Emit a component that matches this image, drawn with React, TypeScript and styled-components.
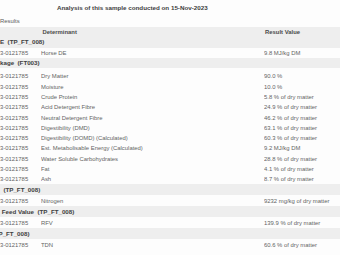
import React from "react";
import styled, { createGlobalStyle } from "styled-components";

const GlobalStyle = createGlobalStyle`
  html, body {
    margin: 0;
    padding: 0;
    background: #ffffff;
    overflow: hidden;
  }
  body {
    font-family: "Liberation Sans", Arial, sans-serif;
    color: #555;
  }
`;

const Page = styled.div`
  width: 340px;
  height: 255px;
  display: flex;
  flex-direction: column;
  background: #fdfdfd;
`;

const Title = styled.div`
  height: 16px;
  line-height: 16px;
  padding-left: 57px;
  font-size: 6.25px;
  font-weight: bold;
  color: #3e3e3e;
  white-space: nowrap;
`;

const Caption = styled.div`
  height: 11px;
  line-height: 11px;
  font-size: 5.9px;
  color: #5c5c5c;
`;

const Row = styled.div<{ $h: number; $band?: boolean; $top?: number }>`
  display: grid;
  grid-template-columns: 41px 223px 1fr;
  align-items: center;
  height: ${(p) => p.$h}px;
  margin-top: ${(p) => p.$top || 0}px;
  background: ${(p) => (p.$band ? "#eeeeee" : "transparent")};
  font-size: 5.9px;
  white-space: nowrap;
  color: #646464;
`;

const HeadCell = styled.span<{ $col: number }>`
  grid-column: ${(p) => p.$col};
  font-weight: bold;
  color: #4a4a4a;
  padding-left: ${(p) => (p.$col === 2 ? 1.5 : 1)}px;
`;

const Group = styled.div<{ $h: number; $shift?: number }>`
  height: ${(p) => p.$h}px;
  line-height: ${(p) => p.$h}px;
  background: #eeeeee;
  font-size: 6.2px;
  font-weight: bold;
  color: #404040;
  white-space: pre;
  margin-left: ${(p) => p.$shift || 0}px;
`;

const Cell = styled.span`
  overflow: hidden;
`;

type Item =
  | { kind: "group"; text: string; h: number; shift?: number }
  | { kind: "data"; name: string; value: string; h: number; top?: number };

const sample = "3-0121785";

const items: Item[] = [
  { kind: "group", text: "E  (TP_FT_008)", h: 10.5 },
  { kind: "data", name: "Horse DE", value: "9.8 MJ/kg DM", h: 10 },
  { kind: "group", text: "kage  (FT003)", h: 10 },
  { kind: "data", name: "Dry Matter", value: "90.0 %", h: 11, top: 3 },
  { kind: "data", name: "Moisture", value: "10.0 %", h: 10.3 },
  { kind: "data", name: "Crude Protein", value: "5.8 % of dry matter", h: 10.3 },
  { kind: "data", name: "Acid Detergent Fibre", value: "24.9 % of dry matter", h: 10.3 },
  { kind: "data", name: "Neutral Detergent Fibre", value: "46.2 % of dry matter", h: 10.3 },
  { kind: "data", name: "Digestibility (DMD)", value: "63.1 % of dry matter", h: 10.3 },
  { kind: "data", name: "Digestibility (DOMD) (Calculated)", value: "60.3 % of dry matter", h: 10.3 },
  { kind: "data", name: "Est. Metabolisable Energy (Calculated)", value: "9.2 MJ/kg DM", h: 10.3 },
  { kind: "data", name: "Water Soluble Carbohydrates", value: "28.8 % of dry matter", h: 10.3 },
  { kind: "data", name: "Fat", value: "4.1 % of dry matter", h: 10.3 },
  { kind: "data", name: "Ash", value: "8.7 % of dry matter", h: 10.3 },
  { kind: "group", text: "  (TP_FT_008)", h: 11 },
  { kind: "data", name: "Nitrogen", value: "9232 mg/kg of dry matter", h: 11 },
  { kind: "group", text: " Feed Value  (TP_FT_008)", h: 11 },
  { kind: "data", name: "RFV", value: "139.9 % of dry matter", h: 11 },
  { kind: "group", text: "P_FT_008)", h: 11, shift: -1.5 },
  { kind: "data", name: "TDN", value: "60.6 % of dry matter", h: 11 },
];

export default function App() {
  return (
    <Page>
      <GlobalStyle />
      <Title>Analysis of this sample conducted on 15-Nov-2023</Title>
      <Caption>Results</Caption>
      <Row $h={10} $band>
        <HeadCell $col={2}>Determinant</HeadCell>
        <HeadCell $col={3}>Result Value</HeadCell>
      </Row>
      {items.map((it, i) =>
        it.kind === "group" ? (
          <Group key={i} $h={it.h} $shift={it.shift}>
            {it.text}
          </Group>
        ) : (
          <Row key={i} $h={it.h} $top={it.top}>
            <Cell>{sample}</Cell>
            <Cell>{it.name}</Cell>
            <Cell>{it.value}</Cell>
          </Row>
        )
      )}
    </Page>
  );
}
